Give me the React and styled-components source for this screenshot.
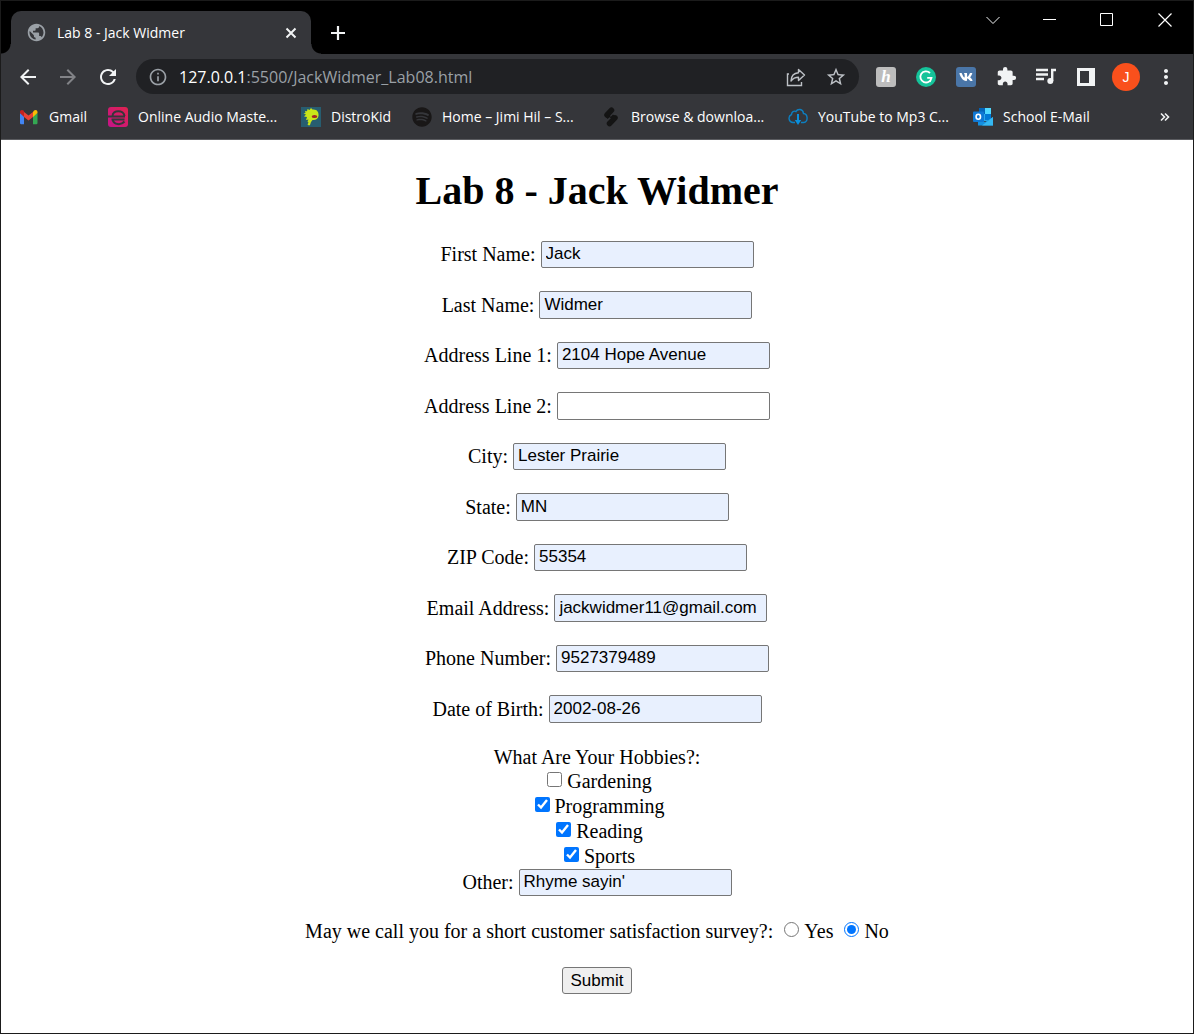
import React from "react";
import styled, { createGlobalStyle, css } from "styled-components";
import {
  MdPublic,
  MdArrowBack,
  MdArrowForward,
  MdRefresh,
  MdInfoOutline,
  MdStarBorder,
  MdExtension,
  MdMoreVert,
} from "react-icons/md";
import { FaSpotify, FaVk } from "react-icons/fa";

const GlobalStyle = createGlobalStyle`
  * { box-sizing: border-box; }
  body { margin: 0; background: #fff; }
`;

const uiFont = css`
  font-family: "Open Sans", "Noto Sans", sans-serif;
`;

const Window = styled.div`
  display: flex;
  flex-direction: column;
  min-height: 100vh;
  border: 1px solid #1b1b1b;
  background: #fff;
`;

/* ---------- browser chrome ---------- */

const Chrome = styled.header`
  ${uiFont}
  background: #35363a;
  border-bottom: 1px solid #5b5c60;
  color: #fff;
`;

const TabStrip = styled.div`
  display: flex;
  height: 53px;
  padding-left: 10px;
  background: #000;
`;

const Tab = styled.div`
  position: relative;
  display: flex;
  align-items: center;
  gap: 10px;
  width: 300px;
  margin-top: 10px;
  padding: 0 10px 0 15px;
  border-radius: 10px 10px 0 0;
  background: #35363a;
  font-size: 14px;

  &::before,
  &::after {
    content: "";
    position: absolute;
    bottom: 0;
    width: 10px;
    height: 10px;
  }
  &::before {
    right: 100%;
    background: radial-gradient(circle at 0 0, #000 9px, #35363a 10px);
  }
  &::after {
    left: 100%;
    background: radial-gradient(circle at 100% 0, #000 9px, #35363a 10px);
  }
`;

const TabTitle = styled.span`
  flex: 1;
  white-space: nowrap;
`;

const IconButton = styled.button`
  display: flex;
  flex: none;
  align-items: center;
  justify-content: center;
  width: ${(p) => p.$w || 40}px;
  height: ${(p) => p.$h || 35}px;
  padding: 0;
  border: 0;
  background: none;
  color: ${(p) => p.$color || "#f1f3f4"};
`;

const NewTab = styled(IconButton)`
  margin: 14px 0 0 12px;
`;

const Caption = styled.div`
  display: flex;
  margin-left: auto;
`;

const Toolbar = styled.div`
  display: flex;
  align-items: center;
  padding: 5px 7px 0;
`;

const Omnibox = styled.label`
  display: flex;
  flex: 1;
  align-items: center;
  min-width: 0;
  height: 35px;
  margin: 0 7px 0 8px;
  padding: 0 3px 0 12px;
  border-radius: 18px;
  background: #202124;
  color: #fff;
  font-size: 16px;
`;

const Host = styled.span`
  margin-left: 11px;
`;

const Path = styled.input`
  flex: 1;
  min-width: 0;
  padding: 0;
  border: 0;
  outline: 0;
  background: none;
  color: #9aa0a6;
  font: inherit;
`;

const Extension = styled.span`
  display: flex;
  align-items: center;
  justify-content: center;
  width: 20px;
  height: 20px;
  border-radius: ${(p) => (p.$round ? 10 : 3)}px;
  background: ${(p) => p.$bg};
  color: #fff;
`;

const HoneyMark = styled.span`
  font: italic bold 17px/20px "Liberation Serif", serif;
`;

const Avatar = styled.span`
  width: 28px;
  height: 28px;
  border-radius: 14px;
  background: #f9501c;
  color: #fff;
  font-size: 14px;
  line-height: 28px;
  text-align: center;
`;

const Bookmarks = styled.nav`
  display: flex;
  align-items: center;
  gap: 20px;
  height: 45px;
  padding: 0 8px 0 18px;
`;

const Bookmark = styled.a`
  display: flex;
  flex: none;
  align-items: center;
  gap: 10px;
  color: #fff;
  font-size: 14px;
  text-decoration: none;
  white-space: nowrap;
`;

const BookmarkName = styled.span`
  min-width: ${(p) => p.$w}px;
`;

const Overflow = styled(IconButton)`
  margin-left: auto;
`;

/* ---------- page ---------- */

const Page = styled.main`
  flex: 1;
  padding: 27px 8px;
  color: #000;
  font: 20px/23px "Liberation Serif", "Times New Roman", serif;
`;

const Title = styled.h1`
  margin: 0 0 27px;
  font-size: 40px;
  line-height: 47px;
  text-align: center;
`;

const Form = styled.form`
  display: flex;
  flex-direction: column;
  align-items: center;
  gap: 23px;
`;

const Field = styled.label`
  display: flex;
  align-items: center;
  gap: 5px;
  height: 27px;

  &:nth-of-type(even) {
    height: 28px;
  }
`;

const TextInput = styled.input`
  width: 213px;
  height: 100%;
  padding: 0 4px 1px;
  border: 1px solid #767676;
  border-radius: 2px;
  background: ${(p) => (p.$filled ? "#e8f0fe" : "#fff")};
  color: #000;
  font: 17px "Liberation Sans", Arial, sans-serif;
`;

const Group = styled.fieldset`
  display: flex;
  flex-direction: column;
  align-items: center;
  min-width: 0;
  margin: 0;
  padding: 0;
  border: 0;
`;

const Legend = styled.legend`
  padding: 0;
  line-height: 23px;
  text-align: center;
`;

const Option = styled.label`
  display: flex;
  align-items: center;
  gap: 5px;
  line-height: 25px;
`;

const Tick = styled.input`
  width: 15px;
  height: 15px;
  margin: 0 0 4px 5px;
`;

const Survey = styled.div`
  display: flex;
  gap: 6px;
`;

const Submit = styled.button`
  height: 27px;
  padding: 0 8px;
  border: 1px solid #767676;
  border-radius: 3px;
  background: #efefef;
  color: #000;
  font: 17px "Liberation Sans", Arial, sans-serif;
`;

/* ---------- drawings ---------- */

const Icon = ({ size = 20, children }) => (
  <svg
    width={size}
    height={size}
    viewBox={`0 0 ${size} ${size}`}
    fill="none"
    aria-hidden="true"
  >
    {children}
  </svg>
);

const GmailIcon = () => (
  <Icon>
    <path d="M1 6v10q0 1.200 1.200 1.200H5V9z" fill="#4285f4" />
    <path d="M14 9v8.200h3.300q1.200 0 1.200-1.200V6z" fill="#34a853" />
    <path d="M14 5v5l4.500-4V5.200C18.500 3 16.500 2.600 15 3.600z" fill="#fbbc04" />
    <path d="M5 10V5l4.500 3.400L14 5v5l-4.500 3.500z" fill="#ea4335" />
    <path d="M1 6V5.200C1 3 3 2.600 4.500 3.600L5 4.400V10z" fill="#c5221f" />
  </Icon>
);

const MasteringIcon = () => (
  <Icon>
    <defs>
      <linearGradient id="pink" x1="0" y1="1" x2="1" y2="0">
        <stop offset="0" stopColor="#c4138a" />
        <stop offset="1" stopColor="#e0234e" />
      </linearGradient>
    </defs>
    <rect width="20" height="20" rx="3" fill="url(#pink)" />
    <path
      d="M0 9.500h17M4.500 9C4.500 2.500 16 2.500 16.500 9M3.500 12.500h13M4.500 12.500C6 18 13 18.500 16.500 14.500"
      stroke="#35363a"
      strokeWidth="2"
    />
  </Icon>
);

const DistroIcon = () => (
  <Icon>
    <path d="M0 0h20v20H0z" fill="#275d70" />
    <path
      d="M4 4l2 .3L6.500 2l2 1 1.500-2 1.500 1.500C16 2 18 5 17.500 9c-.5 3-3 4.500-6 4l-1.500 2-1 3-1 .5-1.500-1 1-2-1-1 1-2-2.500.5L6 10 3 9.500 5 7.500 2.500 6.500 4.500 6z"
      fill="#c9e619"
    />
    <ellipse cx="13.500" cy="9.500" rx="2.800" ry="1.500" fill="#a32325" />
  </Icon>
);

const SpliceIcon = () => (
  <Icon>
    <path
      d="M6 8L10.500 3.200M8.500 16.500L14 10.800"
      stroke="#141414"
      strokeWidth="5.500"
      strokeLinecap="round"
    />
    <path d="M4 8.500l2.500 3.500L10 9zM16 11L12 7.500 8.500 11z" fill="#141414" />
  </Icon>
);

const CloudIcon = () => (
  <Icon>
    <path
      d="M7 15.500H5A4.200 4.200 0 0 1 3.500 7.500C3.500 5 6 3.500 8 4.500 9.500 1.500 15 1.500 15.500 6.500c4.500.5 5 8 .2 9H13"
      stroke="#0d7fc0"
      strokeWidth="1.400"
    />
    <path d="M10 7v7" stroke="#0a8fdc" strokeWidth="2" />
    <path d="M6.800 13h6.400L10 18z" fill="#0a8fdc" />
  </Icon>
);

const OutlookIcon = () => (
  <Icon>
    <path d="M6 1h12v13H6z" fill="#28a8ea" />
    <path d="M6 1h6v6H6z" fill="#0364b8" />
    <path d="M12 7h6v6h-6z" fill="#0078d4" />
    <path d="M12 1h6v6h-6z" fill="#50d9ff" />
    <path d="M5 18.500V11l7 4 8-5v8.500z" fill="#1490df" />
    <path d="M20 10v8.500H9z" fill="#35b8f1" />
    <rect y="4.500" width="11" height="10.500" rx="1" fill="#0f78d4" />
    <ellipse cx="5.300" cy="9.700" rx="2.200" ry="2.500" stroke="#fff" strokeWidth="1.600" />
  </Icon>
);

const ShareIcon = () => (
  <Icon>
    <path d="M3 7H1.500v11.500h14V15" stroke="currentColor" strokeWidth="1.400" />
    <path
      d="M12.500 2.500l6 5.500-6 5.500v-3.200c-3.500 0-5.500 1-7.500 3.700.2-5 3-8 7.500-8.300z"
      stroke="currentColor"
      strokeWidth="1.400"
      strokeLinejoin="round"
    />
  </Icon>
);

const QueueIcon = () => (
  <Icon>
    <path d="M0 3h12M0 7.500h12M0 12h8M16.200 1.800V14M16 3h4" stroke="currentColor" strokeWidth="2.400" />
    <circle cx="14.300" cy="14" r="3" fill="currentColor" />
  </Icon>
);

const GrammarlyIcon = () => (
  <Icon>
    <path
      d="M14 6A5.600 5.600 0 1 0 15.500 10.800H11.200M13.800 14.800l1.700-4"
      stroke="#fff"
      strokeWidth="1.800"
    />
  </Icon>
);

const bookmarks = [
  ["Gmail", 39, <GmailIcon />],
  ["Online Audio Maste...", 143, <MasteringIcon />],
  ["DistroKid", 61, <DistroIcon />],
  ["Home – Jimi Hil – S...", 139, <FaSpotify size={20} color="#191717" />],
  ["Browse & downloa...", 137, <SpliceIcon />],
  ["YouTube to Mp3 C...", 135, <CloudIcon />],
  ["School E-Mail", 91, <OutlookIcon />],
];

const fields = [
  ["First Name:", "Jack"],
  ["Last Name:", "Widmer"],
  ["Address Line 1:", "2104 Hope Avenue"],
  ["Address Line 2:", ""],
  ["City:", "Lester Prairie"],
  ["State:", "MN"],
  ["ZIP Code:", "55354"],
  ["Email Address:", "jackwidmer11@gmail.com"],
  ["Phone Number:", "9527379489"],
  ["Date of Birth:", "2002-08-26"],
];

const hobbies = [
  ["Gardening", false],
  ["Programming", true],
  ["Reading", true],
  ["Sports", true],
];

const LabField = ({ label, value }) => (
  <Field>
    {label}
    <TextInput type="text" defaultValue={value} $filled={value !== ""} />
  </Field>
);

const BrowserChrome = () => (
  <Chrome>
    <TabStrip>
      <Tab>
        <MdPublic size={21} color="#9aa0a6" />
        <TabTitle>Lab 8 - Jack Widmer</TabTitle>
        <IconButton $w={20} $h={20} aria-label="Close tab">
          <Icon size={12}>
            <path d="M1.500 1.500l9 9M10.500 1.500l-9 9" stroke="currentColor" strokeWidth="2" />
          </Icon>
        </IconButton>
      </Tab>
      <NewTab $w={30} aria-label="New tab">
        <Icon size={16}>
          <path d="M8 1v14M1 8h14" stroke="currentColor" strokeWidth="2.200" />
        </Icon>
      </NewTab>
      <Caption>
        <IconButton $w={56} $h={38} aria-label="Search tabs">
          <Icon size={14}>
            <path d="M.5 4L7 10.500 13.500 4" stroke="currentColor" />
          </Icon>
        </IconButton>
        <IconButton $w={57} $h={38} aria-label="Minimize">
          <Icon size={14}>
            <path d="M0 6.500h13" stroke="#fff" />
          </Icon>
        </IconButton>
        <IconButton $w={58} $h={38} aria-label="Maximize">
          <Icon size={14}>
            <path d="M.5 .5h12v12H.5z" stroke="#fff" />
          </Icon>
        </IconButton>
        <IconButton $w={57} $h={38} aria-label="Close window">
          <Icon size={14}>
            <path d="M.5 .5l13 13M13.500 .5l-13 13" stroke="#fff" strokeWidth="1.200" />
          </Icon>
        </IconButton>
      </Caption>
    </TabStrip>
    <Toolbar>
      <IconButton aria-label="Back">
        <MdArrowBack size={24} />
      </IconButton>
      <IconButton aria-label="Forward" $color="#828387">
        <MdArrowForward size={24} />
      </IconButton>
      <IconButton aria-label="Reload">
        <MdRefresh size={24} />
      </IconButton>
      <Omnibox>
        <MdInfoOutline size={20} color="#9aa0a6" />
        <Host>127.0.0.1</Host>
        <Path type="text" defaultValue=":5500/JackWidmer_Lab08.html" />
        <IconButton aria-label="Share" $color="#bdc1c6">
          <ShareIcon />
        </IconButton>
        <IconButton aria-label="Bookmark this page" $color="#bdc1c6">
          <MdStarBorder size={22} />
        </IconButton>
      </Omnibox>
      <IconButton aria-label="Honey">
        <Extension $bg="#bdbdbd">
          <HoneyMark>h</HoneyMark>
        </Extension>
      </IconButton>
      <IconButton aria-label="Grammarly">
        <Extension $bg="#15c39a" $round>
          <GrammarlyIcon />
        </Extension>
      </IconButton>
      <IconButton aria-label="VK">
        <Extension $bg="#4a76a8">
          <FaVk size={14} />
        </Extension>
      </IconButton>
      <IconButton aria-label="Extensions">
        <MdExtension size={21} />
      </IconButton>
      <IconButton aria-label="Media controls">
        <QueueIcon />
      </IconButton>
      <IconButton aria-label="Side panel">
        <Icon size={18}>
          <path d="M1.500 1.500h15v15h-15z" stroke="currentColor" strokeWidth="3" />
          <path d="M12 0h6v18h-6z" fill="currentColor" />
        </Icon>
      </IconButton>
      <IconButton aria-label="Profile">
        <Avatar>J</Avatar>
      </IconButton>
      <IconButton aria-label="Menu">
        <MdMoreVert size={24} />
      </IconButton>
    </Toolbar>
    <Bookmarks>
      {bookmarks.map(([name, width, icon]) => (
        <Bookmark href="#" key={name}>
          {icon}
          <BookmarkName $w={width}>{name}</BookmarkName>
        </Bookmark>
      ))}
      <Overflow aria-label="More bookmarks">
        <Icon size={10}>
          <path
            d="M1 1.500L4.500 5 1 8.500M5 1.500L8.500 5 5 8.500"
            stroke="currentColor"
            strokeWidth="1.600"
          />
        </Icon>
      </Overflow>
    </Bookmarks>
  </Chrome>
);

export default function App() {
  return (
    <Window>
      <GlobalStyle />
      <BrowserChrome />
      <Page>
        <Title>Lab 8 - Jack Widmer</Title>
        <Form onSubmit={(e) => e.preventDefault()}>
          {fields.map(([label, value]) => (
            <LabField key={label} label={label} value={value} />
          ))}
          <Group>
            <Legend>What Are Your Hobbies?:</Legend>
            {hobbies.map(([name, on]) => (
              <Option key={name}>
                <Tick type="checkbox" defaultChecked={on} />
                {name}
              </Option>
            ))}
            <LabField label="Other:" value="Rhyme sayin'" />
          </Group>
          <Survey role="radiogroup" aria-labelledby="survey">
            <Option as="span" id="survey">
              May we call you for a short customer satisfaction survey?:
            </Option>
            <Option>
              <Tick type="radio" name="survey" />
              Yes
            </Option>
            <Option>
              <Tick type="radio" name="survey" defaultChecked />
              No
            </Option>
          </Survey>
          <Submit type="submit">Submit</Submit>
        </Form>
      </Page>
    </Window>
  );
}
